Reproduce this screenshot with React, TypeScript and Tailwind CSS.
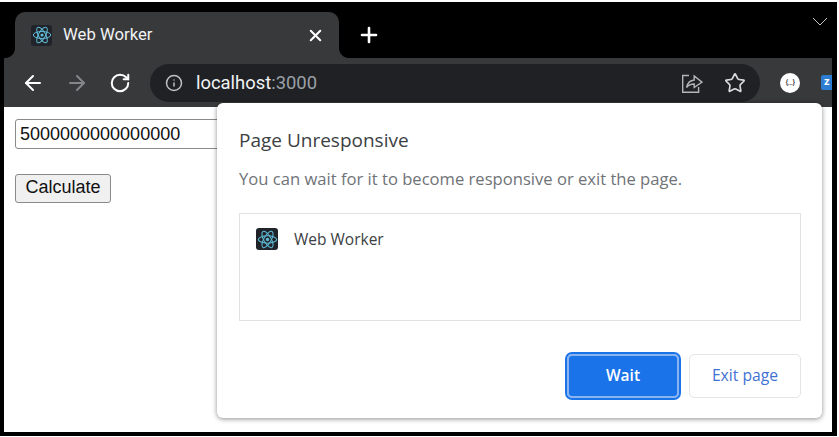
import { ArrowLeft, ArrowRight, Info, Plus, RotateCw, Star, X } from 'lucide-react';

function ReactIcon({ size }: { size: number }) {
  return (
    <div
      className="flex items-center justify-center rounded-[3px] bg-[#20232a]"
      style={{ width: size, height: size }}
    >
      <svg viewBox="-12 -12 24 24" width={size - 1} height={size - 1} fill="none" stroke="#5fbcd6" strokeWidth="1.2">
        <circle r="1.9" fill="#5fbcd6" stroke="none" />
        <ellipse rx="10.5" ry="4.2" />
        <ellipse rx="10.5" ry="4.2" transform="rotate(60)" />
        <ellipse rx="10.5" ry="4.2" transform="rotate(120)" />
      </svg>
    </div>
  );
}

function ShareIcon() {
  return (
    <svg width="22" height="22" viewBox="0 0 22 22" fill="none" stroke="#b4b5b7" strokeWidth="1.4">
      <path d="M8 3.5H1.7V20.2H17.6V15" />
      <path d="M5.5 15.5C6.5 11 9 8.4 13.2 8V4L21 10.2L13.2 15.5V12C10 12 7.5 13 5.5 15.5Z" />
    </svg>
  );
}

function Tab() {
  return (
    <div className="relative flex h-[46px] w-[324px] items-center rounded-t-[10px] bg-[#38393b] pl-[16px] pr-[14px]">
      <div className="absolute bottom-0 -left-[10px] h-[10px] w-[10px] bg-[radial-gradient(circle_at_0_0,#000_9.5px,#38393b_10.5px)]" />
      <div className="absolute bottom-0 -right-[10px] h-[10px] w-[10px] bg-[radial-gradient(circle_at_100%_0,#000_9.5px,#38393b_10.5px)]" />
      <ReactIcon size={21} />
      <span className="ml-[11px] flex-1 text-[16.7px] text-[#f1f3f4]">Web Worker</span>
      <X size={19} strokeWidth={2.6} className="text-white" />
    </div>
  );
}

function Toolbar() {
  return (
    <div className="flex h-[49px] items-center bg-[#38393b] pl-[17px]">
      <ArrowLeft size={24} strokeWidth={2} className="text-white" />
      <ArrowRight size={24} strokeWidth={2} className="ml-[20px] text-[#85868a]" />
      <RotateCw size={22} strokeWidth={2.2} className="ml-[20px] text-white" />
      <div className="ml-[19px] flex h-[38px] w-[610px] items-center rounded-full bg-[#202124] pl-[15px] pr-[14px]">
        <Info size={18} strokeWidth={2} className="text-[#c0c1c3]" />
        <span className="ml-[13px] flex-1 pt-[1px] text-[18.4px] text-[#f1f3f4]">
          localhost<span className="text-[#9aa0a6]">:3000</span>
        </span>
        <ShareIcon />
        <Star size={22} strokeWidth={1.8} className="ml-[21px] text-[#d9dadb]" />
      </div>
      <div className="ml-[20px] flex h-[20px] w-[20px] items-center justify-center rounded-full bg-white text-[8px] font-medium tracking-[-0.6px] text-[#35363a]">
        {'{...}'}
      </div>
      <div className="ml-[21px] flex h-[15px] w-[11px] items-center overflow-hidden rounded-l-[2px] bg-[#2d7dd2] pl-[3px] text-[11px] font-bold text-white">
        z
      </div>
    </div>
  );
}

function Page() {
  return (
    <div className="flex flex-1 flex-col items-start bg-white px-[11px] pt-[12px] font-['Liberation_Sans',sans-serif] text-[18px] text-[#111]">
      <div className="flex h-[30px] w-[300px] items-center rounded-[3px] border border-[#8a8a8a] pl-[4px] text-[18px]">
        5000000000000000
      </div>
      <button className="mt-[25px] flex h-[29px] w-[96px] items-center justify-center rounded-[3px] border border-[#8a8a8a] bg-[#f0f0f0] pb-[2px]">
        Calculate
      </button>
    </div>
  );
}

function Dialog() {
  return (
    <div className="absolute left-[217px] top-[103px] flex h-[315px] w-[605px] flex-col rounded-[6px] bg-white pl-[22px] pr-[21px] font-['Open_Sans',sans-serif] shadow-[0_1px_5px_rgba(0,0,0,0.45)]">
      <h2 className="mt-[23px] text-[19px] leading-[29px] text-[#3c4043]">Page Unresponsive</h2>
      <p className="mt-[12px] text-[16.6px] leading-[24px] text-[#6f7377]">
        You can wait for it to become responsive or exit the page.
      </p>
      <div className="mt-[22px] flex h-[108px] items-start border border-[#dfe1e3] pl-[16px] pt-[14px]">
        <ReactIcon size={22} />
        <span className="ml-[16px] text-[15.5px] leading-[22px] text-[#3c4043]">Web Worker</span>
      </div>
      <div className="mt-[33px] flex justify-end gap-[10px]">
        <button className="flex h-[44px] w-[112px] items-center justify-center rounded-[5px] border-2 border-[#8ab4f0] bg-[#1a73e8] text-[15.5px] font-semibold text-white outline-2 outline-[#1a73e8]">
          Wait
        </button>
        <button className="flex h-[44px] w-[112px] items-center justify-center rounded-[5px] border border-[#e3e5e8] bg-white text-[15.7px] font-medium text-[#3f72d2]">
          Exit page
        </button>
      </div>
    </div>
  );
}

export default function App() {
  return (
    <div className="h-[437px] w-[839px] overflow-hidden bg-white pb-[1px] pr-[2px] pt-[2px]">
      <div className="relative h-[434px] w-[837px] border-y-[4px] border-l-[4px] border-r-[5px] border-black bg-black font-['Roboto',sans-serif]">
        <div className="flex h-full flex-col">
          <div className="relative flex h-[52px] items-end pl-[11px]">
            <Tab />
            <Plus size={24} strokeWidth={2.6} className="mb-[11px] ml-[18px] text-white" />
            <svg
              width="16"
              height="9"
              viewBox="0 0 16 9"
              fill="none"
              stroke="#c8c8c8"
              strokeWidth="1"
              className="absolute right-[4px] top-[11px]"
            >
              <path d="M1 1L8 8L15 1" />
            </svg>
          </div>
          <Toolbar />
          <Page />
        </div>
        <div className="absolute inset-0 -top-[6px] -left-[4px] pointer-events-none">
          <Dialog />
        </div>
      </div>
    </div>
  );
}
